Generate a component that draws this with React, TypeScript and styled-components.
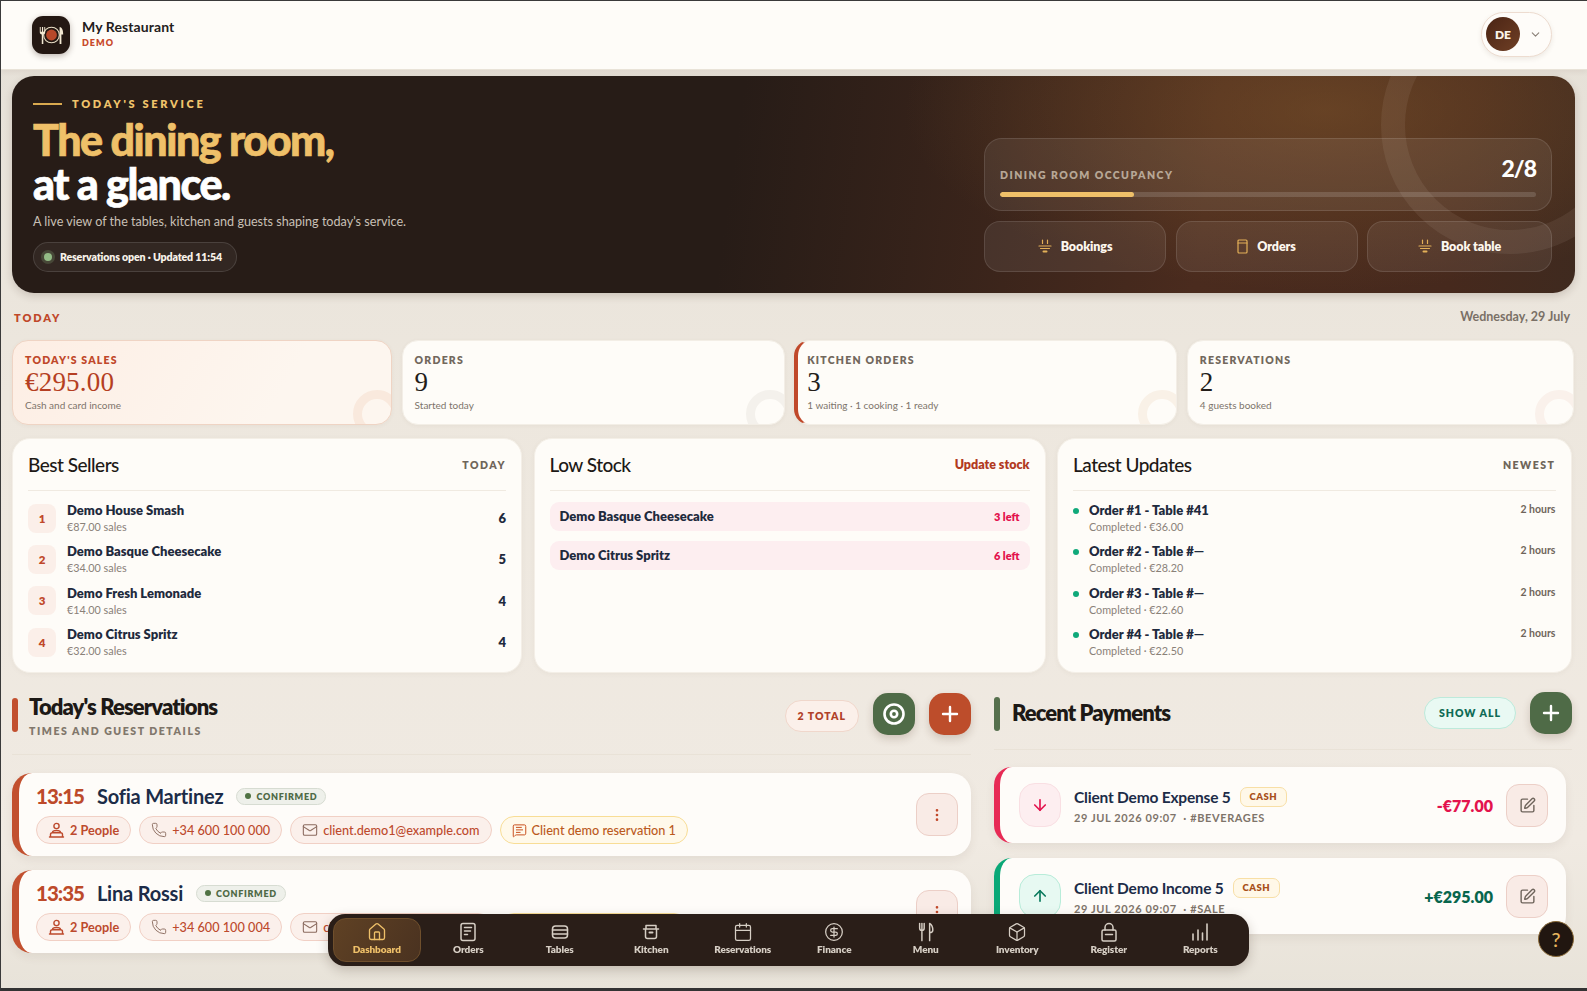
import React from "react";
import styled, { createGlobalStyle } from "styled-components";
import {
  House, Calendar, CircleDollarSign, Box, Phone, Mail, MessageSquareText, EllipsisVertical,
  SquarePen, ArrowDown, ArrowUp, Plus, ChevronDown,
} from "lucide-react";

const Global = createGlobalStyle`
  html, body { margin: 0; padding: 0; height: 100%; overflow: hidden; }
  body { font-family: "Lato", "Noto Sans", sans-serif; background: #ede7dd; color: #1e1a17; }
  * { box-sizing: border-box; }
`;

const Page = styled.div`
  width: 1587px; height: 991px; overflow: hidden; position: relative;
  border-top: 1px solid #3a3a3a; border-left: 1px solid #3a3a3a; border-bottom: 3px solid #333;
  background: linear-gradient(180deg, #e5e0d7 0, #ede7de 40%, #f0eae2 85%, #e8e3d9 100%);
`;
const Header = styled.header`
  height: 69px; background: #fefcf8; display: flex; align-items: center; justify-content: space-between;
  padding: 0 35px 0 31px; border-bottom: 1px solid #e9e3d8; box-shadow: 0 2px 5px rgba(90,70,50,.08);
`;
const Brand = styled.div` display: flex; align-items: center; gap: 12px; `;
const Logo = styled.div`
  width: 38px; height: 38px; border-radius: 11px; background: #241813; display: flex; align-items: center; justify-content: center;
  box-shadow: 0 2px 6px rgba(40,20,10,.3);
`;
const BrandText = styled.div` display: flex; flex-direction: column; margin-top: -3px; `;
const BrandName = styled.div` font-size: 14px; font-weight: 700; line-height: 18px; color: #24201c; letter-spacing: .1px; `;
const BrandTag = styled.div` font-size: 9px; font-weight: 800; line-height: 13px; letter-spacing: 1px; color: #c8492a; `;
const UserPill = styled.div`
  width: 71px; height: 45px; margin-top: -2px; border-radius: 23px; border: 1px solid #eddcd0; background: #fefcf9; display: flex; align-items: center; gap: 9px; padding-left: 4px; color: #8a8078;
  box-shadow: 0 2px 5px rgba(90,70,50,.1);
`;
const Avatar = styled.div`
  width: 34px; height: 34px; border-radius: 50%; background: linear-gradient(135deg,#4a2414,#6f3f25); color: #fbf3e8; font-weight: 800; font-size: 12px;
  display: flex; align-items: center; justify-content: center;
`;
const Main = styled.main` padding: 6px 13px 0 11px; `;
const Hero = styled.section`
  position: relative; overflow: hidden; height: 217px; border-radius: 22px; padding: 21px 23px 21px 21px; display: flex; justify-content: space-between;
  margin-right: -1px;
  background:
    radial-gradient(ellipse 420px 180px at 84% 16%, rgba(140,95,45,.45), rgba(140,95,45,0) 100%),
    linear-gradient(98deg, #271c17 0, #271c17 46%, #4a2b1e 76%, #46291d 92%, #3f2a1f 100%);
  box-shadow: 0 3px 8px rgba(60,40,25,.18);
`;
const HeroRing = styled.div`
  position: absolute; right: -64px; top: -80px; width: 258px; height: 258px; border-radius: 50%; border: 24px solid rgba(255,245,230,.07);
`;
const HeroLeft = styled.div` position: relative; display: flex; flex-direction: column; align-items: flex-start; `;
const Eyebrow = styled.div`
  display: flex; align-items: center; gap: 10px; font-size: 11px; font-weight: 800; letter-spacing: 2.7px; color: #f0c36b; line-height: 14px;
  &::before { content: ""; width: 29px; height: 1.5px; background: #d9a94f; }
`;
const HeroTitle = styled.h1`
  margin: 7px 0 0; font-size: 43px; font-weight: 900; line-height: 44px; letter-spacing: -1.45px; color: #fff; -webkit-text-stroke: .7px currentColor;
  span { color: #efc069; display: block; }
`;
const HeroDesc = styled.p` margin: 7px 0 0; font-size: 12.6px; line-height: 18px; color: #c9c0b6; `;
const StatusPill = styled.div`
  margin-top: 11px; height: 31px; width: 204px; border-radius: 16px; border: 1px solid rgba(255,255,255,.12); background: rgba(255,255,255,.05);
  display: flex; align-items: center; gap: 6px; padding-left: 8px; font-size: 10.6px; font-weight: 800; color: #f7f1e8; letter-spacing: -.15px;
`;
const StatusDot = styled.i`
  width: 8px; height: 8px; border-radius: 50%; background: #93bb85; margin: 0 2px; box-shadow: 0 0 0 3px rgba(147,187,133,.22);
`;
const HeroRight = styled.div` position: relative; width: 568px; margin-top: 41px; display: flex; flex-direction: column; gap: 10px; `;
const Occupancy = styled.div`
  height: 73px; border-radius: 18px; border: 1px solid rgba(255,255,255,.11); background: rgba(255,255,255,.07); padding: 16px 15px 0;
`;
const OccRow = styled.div` display: flex; justify-content: space-between; align-items: flex-end; height: 30px; `;
const OccLabel = styled.div` font-size: 10.5px; font-weight: 800; letter-spacing: 1.45px; color: #b7a796; line-height: 14px; margin-bottom: 3px; `;
const OccValue = styled.div` font-size: 23px; font-weight: 900; color: #fff; letter-spacing: -1px; line-height: 30px; margin-bottom: 2px; `;
const Track = styled.div` margin-top: 7px; height: 5px; border-radius: 3px; background: rgba(255,255,255,.14); overflow: hidden; `;
const Fill = styled.div` height: 100%; background: #efc069; border-radius: 3px; `;
const HeroButtons = styled.div` display: grid; grid-template-columns: 182px 182px 185px; gap: 9.5px; `;
const HeroBtn = styled.div`
  height: 51px; border-radius: 16px; border: 1px solid rgba(255,255,255,.11); background: rgba(255,255,255,.07); display: flex; align-items: center; justify-content: center; gap: 9px;
  color: #fdf7ee; font-size: 12.5px; font-weight: 800; letter-spacing: -.1px;
`;
const TodayRow = styled.div` display: flex; justify-content: space-between; align-items: center; height: 47px; padding: 2px 4px 0 2px; `;
const TodayLabel = styled.div` font-size: 11px; font-weight: 800; letter-spacing: 1.9px; color: #c0482a; `;
const DateText = styled.div` font-size: 12.5px; font-weight: 700; color: #7a7066; margin-top: -3px; `;
const Stats = styled.div` display: grid; grid-template-columns: 380fr 383fr 383fr 387fr; gap: 9.5px; `;
const Stat = styled.div<{ $tone?: string }>`
  position: relative; overflow: hidden; height: 85px; border-radius: 16px; padding: 12px 12px 0; 
  background: ${p => p.$tone === "sales" ? "linear-gradient(120deg,#fdeee4,#fdf6ef 70%)" : "#fefcf8"};
  border: 1px solid ${p => p.$tone === "sales" ? "#efd4c4" : "#f3eee6"};
  ${p => p.$tone === "kitchen" ? "border-left: 4px solid #c0482a; padding-left: 9px;" : ""}
  box-shadow: 0 1px 4px rgba(90,70,50,.05);
`;
const StatRing = styled.div<{ $c: string }>`
  position: absolute; right: -10px; bottom: -14px; width: 48px; height: 48px; border-radius: 50%; border: 9px solid ${p => p.$c};
`;
const StatLabel = styled.div<{ $accent?: boolean }>`
  font-size: 10.5px; font-weight: 800; letter-spacing: 1.2px; line-height: 14px; color: ${p => p.$accent ? "#c0482a" : "#72685d"};
`;
const StatValue = styled.div<{ $accent?: boolean }>`
  font-family: "Liberation Serif", serif; font-size: 27px; line-height: 28px; margin-top: 1px; letter-spacing: .2px; color: ${p => p.$accent ? "#b53f22" : "#231d19"};
`;
const StatSub = styled.div` font-size: 10px; line-height: 14px; margin-top: 2px; color: #7d746b; `;
const Panels = styled.div` display: grid; grid-template-columns: 510px 512px 514.5px; column-gap: 11.5px; margin-top: 13px; `;
const Panel = styled.section`
  height: 235px; border-radius: 18px; background: #fefcf8; border: 1px solid #f4efe7; padding: 0 15px; box-shadow: 0 1px 5px rgba(90,70,50,.05);
`;
const PanelHead = styled.div` height: 52px; display: flex; align-items: center; justify-content: space-between; border-bottom: 1px solid #f0eae1; margin-bottom: 6px; `;
const PanelTitle = styled.h2` margin: 0; font-size: 19px; font-weight: 500; letter-spacing: -.5px; color: #1d1916; `;
const PanelTag = styled.div` font-size: 10.5px; font-weight: 800; letter-spacing: 1.5px; color: #6f655a; `;
const PanelLink = styled.div` font-size: 12.5px; font-weight: 800; color: #b23a1f; `;
const Seller = styled.div` height: 41.3px; display: flex; align-items: center; gap: 11px; padding-top: 1px; `;
const Rank = styled.div`
  width: 28px; height: 29px; border-radius: 8px; background: #fbefe9; color: #c0482a; font-size: 11.5px; font-weight: 800; display: flex; align-items: center; justify-content: center;
`;
const RowBody = styled.div` flex: 1; min-width: 0; `;
const RowName = styled.div` font-size: 13px; font-weight: 800; line-height: 17px; color: #1f2a3d; `;
const RowSub = styled.div` font-size: 10.8px; line-height: 15px; color: #8a8178; `;
const RowCount = styled.div` font-size: 13px; font-weight: 800; color: #1f2a3d; `;
const StockList = styled.div` display: flex; flex-direction: column; gap: 9.5px; padding-top: 5px; `;
const Stock = styled.div`
  height: 29px; border-radius: 9px; background: #fdeef0; display: flex; align-items: center; justify-content: space-between; padding: 0 10px;
`;
const StockLeft = styled.div` font-size: 11px; font-weight: 800; color: #e3134d; `;
const UpdateRow = styled.div` height: 41.3px; display: flex; align-items: flex-start; padding-top: 5px; `;
const UpdateDot = styled.i` width: 6px; height: 6px; border-radius: 50%; background: #10a97a; margin: 6px 10px 0 0; flex: none; `;
const UpdateTime = styled.div` font-size: 10.5px; font-weight: 700; color: #6f655a; margin-top: 1px; `;
const Lower = styled.div` display: grid; grid-template-columns: 959px 578px; gap: 23px; margin-top: 20px; `;
const SectionHead = styled.div<{ $h: number; $mt?: number }>`
  height: ${p => p.$h}px; margin-top: ${p => p.$mt ?? 0}px; display: flex; align-items: flex-start; justify-content: space-between; border-bottom: 1px solid #e9e2d7;
`;
const SectionLeft = styled.div<{ $gap: number }>` display: flex; gap: ${p => p.$gap}px; `;
const AccentBar = styled.div<{ $c: string }>` width: 6px; height: 34px; border-radius: 3px; background: ${p => p.$c}; margin-top: 5px; `;
const SectionTitle = styled.h2<{ $mt?: number }>` margin: ${p => p.$mt ?? 0}px 0 0; font-size: 22px; font-weight: 800; letter-spacing: -.9px; line-height: 28px; color: #1d1916; `;
const SectionSub = styled.div` font-size: 10.5px; font-weight: 800; letter-spacing: 1.55px; color: #81776c; line-height: 16px; margin-top: 2px; `;
const SectionActions = styled.div` display: flex; align-items: center; gap: 14px; `;
const CountPill = styled.div<{ $green?: boolean }>`
  height: 32px; border-radius: 16px; padding: 0 ${p => p.$green ? 14 : 12}px; display: flex; align-items: center; font-size: 10.5px; font-weight: 800; letter-spacing: 1px;
  margin-top: ${p => p.$green ? 0 : 3}px;
  color: ${p => p.$green ? "#0f6b56" : "#b0412a"}; background: ${p => p.$green ? "#e9f9f3" : "#fbf0ea"}; border: 1.5px solid ${p => p.$green ? "#bdeadb" : "#f0d7cb"};
`;
const RoundBtn = styled.div<{ $c: string }>`
  width: 42px; height: 42px; border-radius: 15px; background: ${p => p.$c}; color: #fff; display: flex; align-items: center; justify-content: center;
  box-shadow: 0 4px 8px rgba(80,50,30,.2);
`;
const Cards = styled.div<{ $mt: number; $gap: number }>` display: flex; flex-direction: column; gap: ${p => p.$gap}px; margin-top: ${p => p.$mt}px; `;
const ResCard = styled.article`
  height: 83px; border-radius: 20px; border-left: 7px solid #c2502f; background: #fefcf9; padding: 0 13px 0 17px; display: flex; align-items: center; justify-content: space-between;
  box-shadow: 0 4px 10px rgba(90,70,50,.08);
`;
const ResMain = styled.div` align-self: flex-start; margin-top: 11px; `;
const ResTop = styled.div` display: flex; align-items: center; gap: 13px; height: 24px; margin-bottom: 8px; `;
const ResTime = styled.div` font-size: 20.5px; font-weight: 900; letter-spacing: -1px; color: #bd4a2a; `;
const ResName = styled.div` font-size: 20px; font-weight: 700; letter-spacing: -.2px; color: #1c2c48; `;
const Badge = styled.div`
  height: 17px; border-radius: 9px; background: #eef0ea; border: 1px solid #d7dcd2; padding: 0 8px; display: flex; align-items: center; gap: 5px; font-size: 9px; font-weight: 800; letter-spacing: .7px; color: #4f6a46;
  &::before { content: ""; width: 6px; height: 6px; border-radius: 50%; background: #4f7243; }
`;
const Chips = styled.div` display: flex; gap: 8px; `;
const Chip = styled.div<{ $note?: boolean; $strong?: boolean }>`
  height: 28px; border-radius: 14px; padding: 0 11px; display: flex; align-items: center; gap: 5px; font-size: 12.7px; white-space: nowrap;
  font-weight: ${p => p.$strong ? 700 : 500};
  color: ${p => p.$note ? "#bb5a1d" : "#bd4a2d"}; background: ${p => p.$note ? "#fff9ea" : "#fbf0eb"}; border: 1px solid ${p => p.$note ? "#f8dd96" : "#f1d0c5"};
  svg { flex: none; }
`;
const IconBtn = styled.div`
  width: 42px; height: 43px; border-radius: 13px; background: #f9ebe6; border: 1px solid #eccfc7; display: flex; align-items: center; justify-content: center; flex: none;
`;
const PayCard = styled.article<{ $c: string }>`
  height: 76px; margin-right: 6px; border-radius: 18px; border-left: 6px solid ${p => p.$c}; background: #fefcf9; padding: 0 18px 0 19px; display: flex; align-items: center; gap: 13px;
  box-shadow: 0 4px 10px rgba(90,70,50,.08);
`;
const PayIcon = styled.div<{ $in?: boolean }>`
  width: 42px; height: 44px; border-radius: 16px; display: flex; align-items: center; justify-content: center; flex: none;
  background: ${p => p.$in ? "#e7f9f2" : "#fdeef0"}; border: 1px solid ${p => p.$in ? "#b8ecd9" : "#f9dfe3"}; color: ${p => p.$in ? "#08795c" : "#e3134d"};
`;
const PayBody = styled.div` flex: 1; `;
const PayTop = styled.div` display: flex; align-items: center; gap: 9px; `;
const PayName = styled.div` font-size: 15.5px; font-weight: 700; letter-spacing: -.2px; color: #1c2c48; `;
const CashTag = styled.div`
  height: 20px; border-radius: 7px; background: #fff8e8; border: 1px solid #f8dfa6; color: #a8501a; font-size: 9.5px; font-weight: 800; letter-spacing: .5px; padding: 0 9px; display: flex; align-items: center;
`;
const PayMeta = styled.div` font-size: 11px; font-weight: 700; letter-spacing: .6px; color: #7e746a; margin-top: 4px; white-space: pre; `;
const Amount = styled.div<{ $in?: boolean }>` font-size: 16px; font-weight: 800; color: ${p => p.$in ? "#08664d" : "#e3134d"}; `;
const Nav = styled.nav`
  position: fixed; left: 328px; top: 914px; width: 921px; height: 52px; border-radius: 17px; background: #2a1e18; display: flex; padding: 0 3px;
  box-shadow: 0 4px 12px rgba(50,30,20,.22); z-index: 5;
`;
const NavItem = styled.div<{ $active?: boolean }>`
  flex: 1; margin: 4px 2px; padding-bottom: 3px; border-radius: 13px; display: flex; flex-direction: column; align-items: center; justify-content: center; gap: 1px; font-size: 10px; font-weight: 800; letter-spacing: -.1px;
  color: ${p => p.$active ? "#efc069" : "#d6cec4"};
  background: ${p => p.$active ? "linear-gradient(120deg,#5f4124,#4a3220)" : "transparent"};
  border: 1px solid ${p => p.$active ? "#6f4f2c" : "transparent"};
`;
const Help = styled.div`
  position: fixed; right: 13px; top: 921px; width: 36px; height: 36px; border-radius: 50%; background: #211610; border: 1px solid #8a6a38; color: #e5b55e; font-size: 20px; font-weight: 500; display: flex; align-items: center; justify-content: center; z-index: 6;
`;

const ic = { fill: "none", stroke: "currentColor", strokeLinecap: "round" as const, strokeLinejoin: "round" as const };
const LogoMark = () => (
  <svg width="27" height="24" viewBox="0 0 30 26">
    <circle cx="15" cy="13" r="8.7" fill="#241813" stroke="#eadfc6" strokeWidth="1.2" />
    <circle cx="15" cy="13" r="6" fill="#b8482a" />
    <path d="M2 4v6c0 1.6 1 2.3 2.2 2.5V23h1.7V12.5C7 12.3 8 11.6 8 10V4H7v5.5H5.7V4H4.4v5.5H3V4z" fill="#f3e9d3" />
    <path d="M24 4c3 .6 4 4 4 8.5h-2V23h-2z" fill="#f3e9d3" />
  </svg>
);
const PlugIcon = () => (
  <svg width="14" height="15" viewBox="0 0 14 15" {...ic} stroke="#e3b058" strokeWidth="1.2">
    <path d="M4.5 1v3.5M9.5 1v3.5M1 7h12M2.5 9.5h9" />
    <path d="M5.5 12.5h3" strokeWidth="2" />
  </svg>
);
const CupIcon = () => (
  <svg width="11" height="15" viewBox="0 0 11 15" {...ic} stroke="#e3b058" strokeWidth="1.2">
    <rect x="1" y="1" width="9" height="13" rx="1" /><path d="M1 4h9" />
  </svg>
);
const Person = () => (
  <svg width="17" height="17" viewBox="0 0 17 17" {...ic} stroke="currentColor" strokeWidth="1.4">
    <circle cx="8.5" cy="4" r="2.6" /><path d="M4.5 10.5c0-2.6 8-2.6 8 0M1.5 15h14M2.5 15v-2.5c0-1 .8-1.8 1.8-1.8h8.4c1 0 1.8.8 1.8 1.8V15" />
  </svg>
);
const Target = () => (
  <svg width="26" height="26" viewBox="0 0 26 26" {...ic} stroke="#fff" strokeWidth="2.6">
    <circle cx="13" cy="13" r="9.5" /><circle cx="13" cy="13" r="3.2" />
  </svg>
);
const OrdersIcon = () => (
  <svg width="20" height="20" viewBox="0 0 20 20" {...ic} stroke="currentColor" strokeWidth="1.5">
    <rect x="3" y="1.5" width="14" height="17" rx="2" /><path d="M6.5 5.5h7M6.5 9h6M6.5 12.5h3" />
  </svg>
);
const TablesIcon = () => (
  <svg width="20" height="20" viewBox="0 0 20 20" {...ic} stroke="currentColor" strokeWidth="1.5">
    <rect x="2.5" y="4" width="15" height="12" rx="3" /><path d="M2.5 8h15M2.5 12h15" />
  </svg>
);
const KitchenIcon = () => (
  <svg width="20" height="20" viewBox="0 0 20 20" {...ic} stroke="currentColor" strokeWidth="1.5">
    <path d="M2.5 7h15M5 3.5h10M5 3.5V7M15 3.5V7M4.5 7v7.5c0 1 .8 2 2 2h7c1.2 0 2-1 2-2V7" /><path d="M8.5 10.5h3" strokeWidth="2" />
  </svg>
);
const MenuIcon = () => (
  <svg width="20" height="20" viewBox="0 0 20 22" {...ic} stroke="currentColor" strokeWidth="1.6">
    <path d="M3 1.5v5.5c0 1.4 1 2.4 2.5 2.4S8 8.4 8 7V1.5M5.5 1.5v19" /><path d="M14 20.5V1.5c2.4 1.4 3.5 4.4 3.5 7.6 0 1.6-1.3 2.6-3.5 2.6" />
  </svg>
);
const RegisterIcon = () => (
  <svg width="20" height="20" viewBox="0 0 20 20" {...ic} stroke="currentColor" strokeWidth="1.5">
    <path d="M6 8V5.5a4 4 0 0 1 8 0V8" /><rect x="3" y="8" width="14" height="11" rx="1.5" /><path d="M6.5 12.5h7" />
  </svg>
);
const ReportsIcon = () => (
  <svg width="20" height="20" viewBox="0 0 20 20" {...ic} stroke="currentColor" strokeWidth="1.6">
    <path d="M3 18v-6M8 18V8M12.5 18v-7M17 18V2" />
  </svg>
);

const sellers = [
  ["1", "Demo House Smash", "€87.00 sales", "6"],
  ["2", "Demo Basque Cheesecake", "€34.00 sales", "5"],
  ["3", "Demo Fresh Lemonade", "€14.00 sales", "4"],
  ["4", "Demo Citrus Spritz", "€32.00 sales", "4"],
];
const updates = [
  ["Order #1 - Table #41", "Completed · €36.00"],
  ["Order #2 - Table #—", "Completed · €28.20"],
  ["Order #3 - Table #—", "Completed · €22.60"],
  ["Order #4 - Table #—", "Completed · €22.50"],
];
const reservations = [
  ["13:15", "Sofia Martinez", "+34 600 100 000", "client.demo1@example.com", "Client demo reservation 1"],
  ["13:35", "Lina Rossi", "+34 600 100 004", "client.demo5@example.com", "Client demo reservation 5"],
];
const navItems: [string, React.ReactNode][] = [
  ["Dashboard", <House key="h" size={20} strokeWidth={1.6} />],
  ["Orders", <OrdersIcon key="o" />],
  ["Tables", <TablesIcon key="t" />],
  ["Kitchen", <KitchenIcon key="k" />],
  ["Reservations", <Calendar key="c" size={20} strokeWidth={1.5} />],
  ["Finance", <CircleDollarSign key="f" size={20} strokeWidth={1.5} />],
  ["Menu", <MenuIcon key="m" />],
  ["Inventory", <Box key="b" size={20} strokeWidth={1.5} />],
  ["Register", <RegisterIcon key="r" />],
  ["Reports", <ReportsIcon key="p" />],
];

export default function App() {
  return (
    <Page>
      <Global />
      <Header>
        <Brand>
          <Logo><LogoMark /></Logo>
          <BrandText><BrandName>My Restaurant</BrandName><BrandTag>DEMO</BrandTag></BrandText>
        </Brand>
        <UserPill><Avatar>DE</Avatar><ChevronDown size={13} /></UserPill>
      </Header>
      <Main>
        <Hero>
          <HeroRing />
          <HeroLeft>
            <Eyebrow>TODAY'S SERVICE</Eyebrow>
            <HeroTitle><span>The dining room,</span>at a glance.</HeroTitle>
            <HeroDesc>A live view of the tables, kitchen and guests shaping today's service.</HeroDesc>
            <StatusPill><StatusDot />Reservations open · Updated 11:54</StatusPill>
          </HeroLeft>
          <HeroRight>
            <Occupancy>
              <OccRow><OccLabel>DINING ROOM OCCUPANCY</OccLabel><OccValue>2/8</OccValue></OccRow>
              <Track><Fill style={{ width: "25%" }} /></Track>
            </Occupancy>
            <HeroButtons>
              <HeroBtn><PlugIcon />Bookings</HeroBtn>
              <HeroBtn><CupIcon />Orders</HeroBtn>
              <HeroBtn><PlugIcon />Book table</HeroBtn>
            </HeroButtons>
          </HeroRight>
        </Hero>
        <TodayRow><TodayLabel>TODAY</TodayLabel><DateText>Wednesday, 29 July</DateText></TodayRow>
        <Stats>
          <Stat $tone="sales"><StatRing $c="#f9e9dd" /><StatLabel $accent>TODAY'S SALES</StatLabel><StatValue $accent>€295.00</StatValue><StatSub>Cash and card income</StatSub></Stat>
          <Stat><StatRing $c="#f4f1ec" /><StatLabel>ORDERS</StatLabel><StatValue>9</StatValue><StatSub>Started today</StatSub></Stat>
          <Stat $tone="kitchen"><StatRing $c="#f9f1e7" /><StatLabel>KITCHEN ORDERS</StatLabel><StatValue>3</StatValue><StatSub>1 waiting · 1 cooking · 1 ready</StatSub></Stat>
          <Stat><StatRing $c="#faf1eb" /><StatLabel>RESERVATIONS</StatLabel><StatValue>2</StatValue><StatSub>4 guests booked</StatSub></Stat>
        </Stats>
        <Panels>
          <Panel>
            <PanelHead><PanelTitle>Best Sellers</PanelTitle><PanelTag>TODAY</PanelTag></PanelHead>
            {sellers.map(s => (
              <Seller key={s[0]}><Rank>{s[0]}</Rank><RowBody><RowName>{s[1]}</RowName><RowSub>{s[2]}</RowSub></RowBody><RowCount>{s[3]}</RowCount></Seller>
            ))}
          </Panel>
          <Panel>
            <PanelHead><PanelTitle>Low Stock</PanelTitle><PanelLink>Update stock</PanelLink></PanelHead>
            <StockList>
              <Stock><RowName>Demo Basque Cheesecake</RowName><StockLeft>3 left</StockLeft></Stock>
              <Stock><RowName>Demo Citrus Spritz</RowName><StockLeft>6 left</StockLeft></Stock>
            </StockList>
          </Panel>
          <Panel>
            <PanelHead><PanelTitle>Latest Updates</PanelTitle><PanelTag>NEWEST</PanelTag></PanelHead>
            {updates.map(u => (
              <UpdateRow key={u[0]}><UpdateDot /><RowBody><RowName>{u[0]}</RowName><RowSub>{u[1]}</RowSub></RowBody><UpdateTime>2 hours</UpdateTime></UpdateRow>
            ))}
          </Panel>
        </Panels>
        <Lower>
          <div>
            <SectionHead $h={62}>
              <SectionLeft $gap={11}>
                <AccentBar $c="#c2502f" />
                <div><SectionTitle>Today's Reservations</SectionTitle><SectionSub>TIMES AND GUEST DETAILS</SectionSub></div>
              </SectionLeft>
              <SectionActions>
                <CountPill>2 TOTAL</CountPill>
                <RoundBtn $c="#4f6b47"><Target /></RoundBtn>
                <RoundBtn $c="#bd4d2b"><Plus size={24} strokeWidth={2.4} /></RoundBtn>
              </SectionActions>
            </SectionHead>
            <Cards $mt={18} $gap={14}>
              {reservations.map(r => (
                <ResCard key={r[0]}>
                  <ResMain>
                    <ResTop><ResTime>{r[0]}</ResTime><ResName>{r[1]}</ResName><Badge>CONFIRMED</Badge></ResTop>
                    <Chips>
                      <Chip $strong><Person />2 People</Chip>
                      <Chip><Phone size={16} strokeWidth={1.4} color="#8a6a5e" />{r[2]}</Chip>
                      <Chip><Mail size={16} strokeWidth={1.6} color="#8a6a5e" />{r[3]}</Chip>
                      <Chip $note><MessageSquareText size={15} strokeWidth={1.6} color="#c9501f" />{r[4]}</Chip>
                    </Chips>
                  </ResMain>
                  <IconBtn><EllipsisVertical size={16} color="#c0482a" /></IconBtn>
                </ResCard>
              ))}
            </Cards>
          </div>
          <div>
            <SectionHead $h={58} $mt={-1}>
              <SectionLeft $gap={12}>
                <AccentBar $c="#56704d" />
                <SectionTitle $mt={7}>Recent Payments</SectionTitle>
              </SectionLeft>
              <SectionActions>
                <CountPill $green>SHOW ALL</CountPill>
                <RoundBtn $c="#4f6b47"><Plus size={24} strokeWidth={2.4} /></RoundBtn>
              </SectionActions>
            </SectionHead>
            <Cards $mt={17} $gap={15}>
              <PayCard $c="#e72a55">
                <PayIcon><ArrowDown size={18} strokeWidth={2.2} /></PayIcon>
                <PayBody><PayTop><PayName>Client Demo Expense 5</PayName><CashTag>CASH</CashTag></PayTop><PayMeta>29 JUL 2026 09:07  · #BEVERAGES</PayMeta></PayBody>
                <Amount>-€77.00</Amount>
                <IconBtn><SquarePen size={17} color="#6f655c" /></IconBtn>
              </PayCard>
              <PayCard $c="#0aa877">
                <PayIcon $in><ArrowUp size={18} strokeWidth={2.2} /></PayIcon>
                <PayBody><PayTop><PayName>Client Demo Income 5</PayName><CashTag>CASH</CashTag></PayTop><PayMeta>29 JUL 2026 09:07  · #SALE</PayMeta></PayBody>
                <Amount $in>+€295.00</Amount>
                <IconBtn><SquarePen size={17} color="#6f655c" /></IconBtn>
              </PayCard>
            </Cards>
          </div>
        </Lower>
      </Main>
      <Nav>
        {navItems.map(([l, i], n) => <NavItem key={l} $active={n === 0}>{i}{l}</NavItem>)}
      </Nav>
      <Help>?</Help>
    </Page>
  );
}
